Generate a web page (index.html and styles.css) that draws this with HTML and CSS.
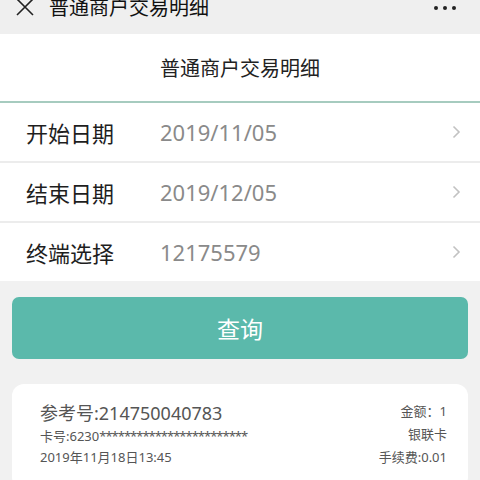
FILE: index.html
```html
<!DOCTYPE html>
<html lang="zh-CN">
<head>
<meta charset="utf-8">
<title>普通商户交易明细</title>
<link rel="stylesheet" href="styles.css">
</head>
<body>
<div class="topbar">
  <div class="topbar-inner">
    <svg class="close-icon" width="18" height="18" viewBox="0 0 18 18"><path d="M1 1L17 17M17 1L1 17" stroke="#222" stroke-width="1.6" fill="none"/></svg>
    <span class="topbar-title">普通商户交易明细</span>
    <span class="more"><i></i><i></i><i></i></span>
  </div>
</div>
<div class="header">普通商户交易明细</div>
<div class="form">
  <div class="row">
    <span class="label">开始日期</span>
    <span class="value">2019/11/05</span>
    <svg class="chev" width="9" height="14" viewBox="0 0 9 14"><path d="M1.5 1.5L7 7L1.5 12.5" stroke="#c2c2c2" stroke-width="1.6" fill="none"/></svg>
  </div>
  <div class="row">
    <span class="label">结束日期</span>
    <span class="value">2019/12/05</span>
    <svg class="chev" width="9" height="14" viewBox="0 0 9 14"><path d="M1.5 1.5L7 7L1.5 12.5" stroke="#c2c2c2" stroke-width="1.6" fill="none"/></svg>
  </div>
  <div class="row">
    <span class="label">终端选择</span>
    <span class="value">12175579</span>
    <svg class="chev" width="9" height="14" viewBox="0 0 9 14"><path d="M1.5 1.5L7 7L1.5 12.5" stroke="#c2c2c2" stroke-width="1.6" fill="none"/></svg>
  </div>
</div>
<div class="content">
  <button class="query">查询</button>
  <div class="card">
    <div class="card-left">
      <div class="ref">参考号:214750040783</div>
      <div class="cardno">卡号:6230<span class="mask">************************</span></div>
      <div class="date">2019年11月18日13:45</div>
    </div>
    <div class="card-right">
      <div>金额：1</div>
      <div>银联卡</div>
      <div>手续费:0.01</div>
    </div>
  </div>
</div>
</body>
</html>
```
FILE: styles.css
```css
* { box-sizing: border-box; }
html, body {
  margin: 0;
  padding: 0;
  background: #f1f1f1;
  font-family: "Noto Sans", "Noto Sans CJK SC", sans-serif;
  width: 480px;
  height: 480px;
  overflow: hidden;
}
.topbar {
  height: 34px;
  background: #efefef;
  overflow: hidden;
}
.topbar-inner {
  margin-top: -14px;
  height: 44px;
  display: flex;
  align-items: center;
  padding-left: 16px;
  padding-right: 24px;
}
.close-icon {
  flex: none;
  margin-top: -3px;
}
.topbar-title {
  margin-left: 15px;
  font-size: 20px;
  line-height: 24px;
  color: #111;
  flex: 1;
}
.more {
  display: flex;
  gap: 5px;
}
.more i {
  display: block;
  width: 4px;
  height: 4px;
  border-radius: 50%;
  background: #222;
}
.header {
  height: 69px;
  background: #fff;
  border-bottom: 2px solid #a6cbbf;
  text-align: center;
  font-size: 20px;
  line-height: 69px;
  color: #222;
}
.form {
  background: #fff;
}
.row {
  height: 60px;
  display: flex;
  align-items: center;
  padding-left: 26px;
  padding-right: 19px;
  border-bottom: 2px solid #ececec;
}
.row:last-child {
  border-bottom: 0;
  height: 58px;
}
.label {
  width: 134px;
  font-size: 22px;
  color: #1e1e1e;
  flex: none;
}
.value {
  flex: 1;
  font-size: 22px;
  color: #8a8a8a;
}
.chev {
  flex: none;
}
.content {
  padding: 16px 12px 0;
}
.query {
  display: block;
  width: 100%;
  height: 62px;
  border: 0;
  border-radius: 7px;
  background: #5bb9ab;
  color: #fff;
  font-family: inherit;
  font-size: 23px;
  padding: 0;
}
.card {
  margin-top: 25px;
  background: #fff;
  border-radius: 12px;
  padding: 16px 21px 20px 28px;
  display: flex;
  justify-content: space-between;
}
.ref {
  font-size: 18px;
  line-height: 26px;
  color: #555;
}
.cardno {
  font-size: 13px;
  line-height: 20px;
  color: #555;
}
.mask {
  letter-spacing: -1px;
}
.date {
  font-size: 13px;
  line-height: 22px;
  color: #555;
}
.card-right {
  text-align: right;
  font-size: 13px;
  line-height: 23px;
  color: #555;
}
```
